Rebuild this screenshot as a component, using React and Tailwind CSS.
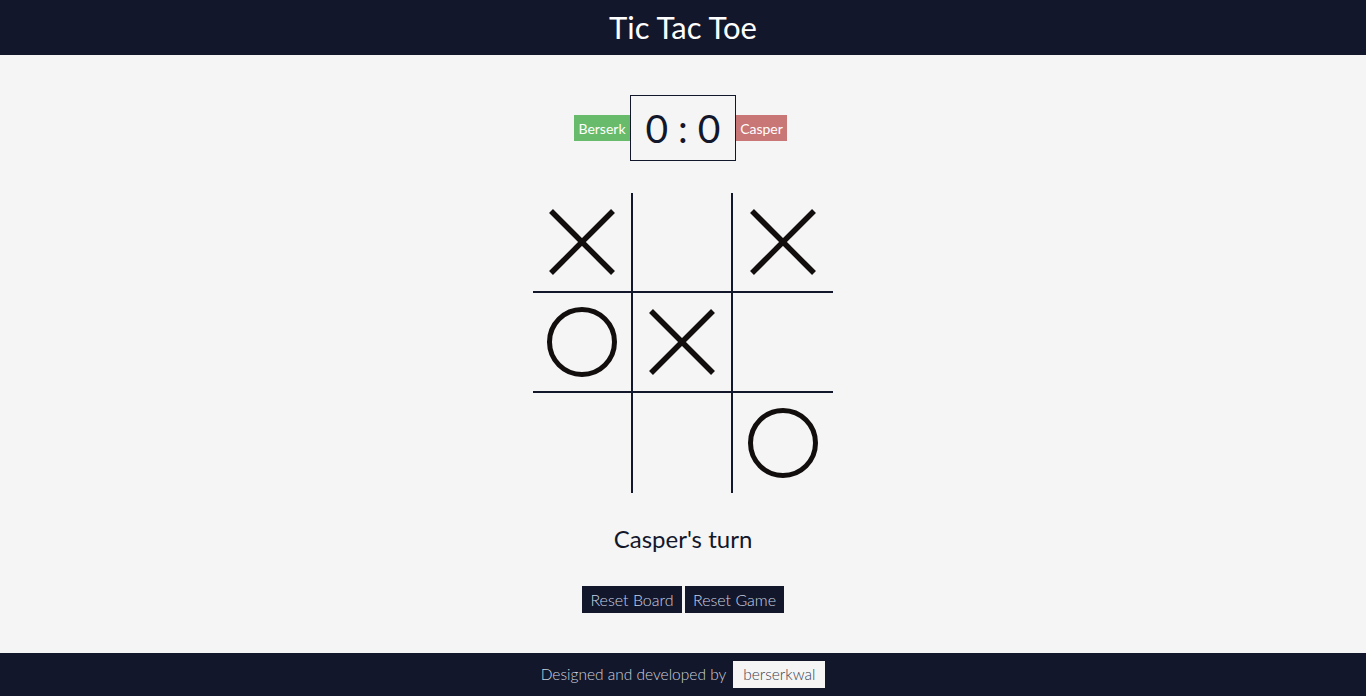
import React, { useState } from 'react';

const board = ['X', '', 'X', 'O', 'X', '', '', '', 'O'];

function Mark({ value }) {
    if (value === 'X') {
        return (
            <svg width="70" height="70" viewBox="0 0 70 70">
                <line x1="4" y1="4" x2="66" y2="66" stroke="#130e0e" strokeWidth="5.5" />
                <line x1="66" y1="4" x2="4" y2="66" stroke="#130e0e" strokeWidth="5.5" />
            </svg>
        );
    }
    if (value === 'O') {
        return (
            <svg width="72" height="72" viewBox="0 0 72 72">
                <circle cx="36" cy="36" r="32.5" fill="none" stroke="#130e0e" strokeWidth="5" />
            </svg>
        );
    }
    return null;
}

export default function App() {
    const [cells] = useState(board);

    return (
        <div className="min-h-screen flex flex-col bg-[#f5f5f5] font-['Lato','Open_Sans',sans-serif]">
            {/* Header */}
            <header className="h-[55px] bg-[#13172b] flex items-center justify-center">
                <h1 className="text-[31px] text-white leading-none">Tic Tac Toe</h1>
            </header>

            <main className="flex-1 flex flex-col items-center pt-[40px]">
                {/* Score */}
                <div className="flex items-center mr-[5px]">
                    <span className="h-[26px] w-[56px] flex items-center justify-center bg-[#67bb6a] text-white text-[14px] font-normal">Berserk</span>
                    <div className="h-[66px] w-[106px] border border-[#13172b] flex items-center justify-center text-[39px] text-[#13172b] font-normal leading-none">
                        0 : 0
                    </div>
                    <span className="h-[26px] w-[51px] flex items-center justify-center bg-[#c97676] text-white text-[14px] font-normal">Casper</span>
                </div>

                {/* Board */}
                <div className="grid grid-cols-[100px_100px_100px] mt-[32px]">
                    {cells.map((c, i) => (
                        <div
                            key={i}
                            className={
                                'h-[100px] w-[100px] flex items-center justify-center border-[#13172b] ' +
                                (i % 3 !== 2 ? 'border-r-2 ' : '') +
                                (i < 6 ? 'border-b-2' : '')
                            }
                        >
                            <Mark value={c} />
                        </div>
                    ))}
                </div>

                <p className="mt-[34px] text-[24px] text-[#13172b] leading-none">Casper's turn</p>

                <div className="flex gap-[3px] mt-[35px]">
                    <button className="h-[27px] w-[100px] bg-[#13172b] text-[#c8d0e2] text-[16px] font-light">Reset Board</button>
                    <button className="h-[27px] w-[99px] bg-[#13172b] text-[#c8d0e2] text-[16px] font-light">Reset Game</button>
                </div>
            </main>

            {/* Footer */}
            <footer className="h-[43px] bg-[#13172b] flex items-center justify-center gap-[7px]">
                <span className="text-[15.5px] text-[#ccd2de] font-light">Designed and developed by</span>
                <span className="h-[27px] w-[92px] justify-center bg-[#f5f5f5] text-[#3a3f52] text-[15.5px] font-light flex items-center">berserkwal</span>
            </footer>
        </div>
    );
}
